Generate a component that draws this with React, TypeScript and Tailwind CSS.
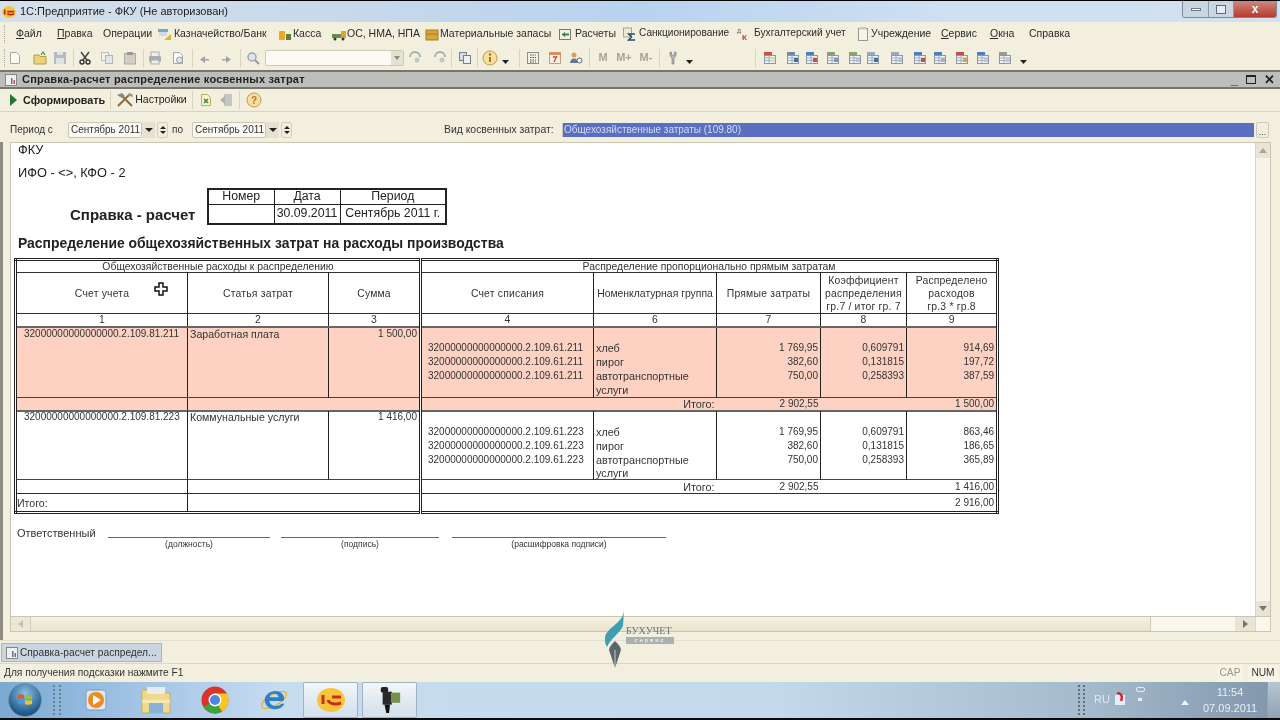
import type { ReactNode } from 'react';

type IconProps = { className?: string };

function Grip({ className = '' }: IconProps) {
  return <div className={`h-[18px] w-[2px] border-l border-dotted border-[#a8a493] ${className}`} />;
}

function Sep({ className = '' }: IconProps) {
  return <div className={`h-[18px] w-px bg-[#d9d4c0] ${className}`} />;
}

function Drop({ className = '' }: IconProps) {
  return (
    <svg viewBox="0 0 7 14" className={`h-[14px] w-[7px] shrink-0 ${className}`}>
      <path d="M0 9h7l-3.500 4z" fill="#222" />
    </svg>
  );
}

function Ic({ className = '', children }: IconProps & { children: ReactNode }) {
  return (
    <svg viewBox="0 0 14 14" className={`h-[14px] w-[14px] shrink-0 ${className}`}>
      {children}
    </svg>
  );
}

const Paper = (
  <path d="M2.500 1.500h6l3 3v8h-9z" fill="#fbfbf6" stroke="#a8a8a0" />
);

function ReportIcon({ a, b, className = '' }: IconProps & { a: string; b: string }) {
  return (
    <Ic className={className}>
      <rect x="1" y="1" width="8" height="3" fill={a} />
      <rect x="1.500" y="4.500" width="11" height="8" fill="#eef1f6" stroke="#8c98aa" />
      <path d="M2 7h10M2 9.500h10M6 5v7" stroke="#8c98aa" strokeWidth=".7" />
      <rect x="8" y="7" width="4" height="4" fill={b} />
    </Ic>
  );
}

function MemText({ children, className = '' }: IconProps & { children: ReactNode }) {
  return <span className={`text-center text-[11px] font-bold text-[#a6a498] ${className}`}>{children}</span>;
}

function TopToolbar() {
  return (
    <div className="flex h-[25px] items-center bg-[#f3efdf] pl-[4px]">
      <Grip />
      <Ic className="ml-[2px]">{Paper}</Ic>
      <Ic className="ml-[11px]">
        <path d="M1 4h5l1 1.500h6V13H1z" fill="#ecd27c" stroke="#b59a48" />
        <path d="M8 4l2-3 2 3" fill="none" stroke="#4c8f4c" strokeWidth="1.200" />
      </Ic>
      <Ic className="ml-[6px]">
        <rect x="1" y="1" width="12" height="12" fill="#b4bac0" />
        <rect x="3" y="7" width="8" height="6" fill="#dfe2e4" />
        <rect x="4" y="1" width="6" height="3" fill="#dfe2e4" />
      </Ic>
      <Sep className="ml-[6px]" />
      <Ic className="ml-[4px]">
        <path d="M3 1l6 8M11 1L5 9" stroke="#444" strokeWidth="1.500" />
        <circle cx="4" cy="11" r="2" fill="none" stroke="#333" strokeWidth="1.400" />
        <circle cx="10" cy="11" r="2" fill="none" stroke="#333" strokeWidth="1.400" />
      </Ic>
      <Ic className="ml-[8px]">
        <rect x="1.500" y="1.500" width="7" height="8" fill="#f2f2ee" stroke="#bdbdb6" />
        <rect x="5.500" y="4.500" width="7" height="8" fill="#e3e7ea" stroke="#b0b6ba" />
      </Ic>
      <Ic className="ml-[9px]">
        <rect x="1.500" y="2.500" width="11" height="10.500" fill="#d2cfc2" stroke="#adaa9e" />
        <rect x="4" y="1" width="6" height="3" fill="#999" />
      </Ic>
      <Sep className="ml-[6px]" />
      <Ic className="ml-[4px]">
        <rect x="3" y="1" width="8" height="5" fill="#eee" stroke="#aaa" />
        <rect x="1" y="5" width="12" height="6" rx="1" fill="#a9adb0" />
        <rect x="3" y="9" width="8" height="4" fill="#ecedee" stroke="#aaa" />
      </Ic>
      <Ic className="ml-[9px]">
        {Paper}
        <circle cx="8.500" cy="9" r="3" fill="#dfe5e8" stroke="#979ea4" />
      </Ic>
      <Sep className="ml-[7px]" />
      <Ic className="ml-[5px]">
        <path d="M11 8H7V5L2 8.500 7 12V9.500h4z" fill="#a0a4a6" />
      </Ic>
      <Ic className="ml-[7px]">
        <path d="M3 8h4V5l5 3.500L7 12V9.500H3z" fill="#a0a4a6" />
      </Ic>
      <Sep className="ml-[7px]" />
      <Ic className="ml-[5px]">
        <circle cx="6" cy="6" r="4" fill="#dfe6ea" stroke="#9ea6ac" strokeWidth="1.500" />
        <path d="M9 9l4 4" stroke="#9a9a94" strokeWidth="2" />
      </Ic>
      <div className="ml-[5px] flex h-[16px] w-[139px] justify-end rounded-[2px] border border-[#cdc9b8] bg-[#fbfaf4]">
        <div className="flex w-[12px] items-center justify-center bg-[#e5e1d0]">
          <div className="h-0 w-0 border-x-[3px] border-t-[4px] border-x-transparent border-t-[#8a8a80]" />
        </div>
      </div>
      <Ic className="ml-[4px]">
        <path d="M2 6a5 5 0 0 1 10 0" fill="none" stroke="#a9aeb0" strokeWidth="2" />
        <circle cx="9" cy="9" r="2.500" fill="#c3c8ca" />
      </Ic>
      <Ic className="ml-[11px]">
        <path d="M2 6a5 5 0 0 1 10 0" fill="none" stroke="#a9aeb0" strokeWidth="2" />
        <circle cx="9" cy="9" r="2.500" fill="#c3c8ca" />
      </Ic>
      <Sep className="ml-[4px]" />
      <Ic className="ml-[6px]">
        <rect x="1.500" y="1.500" width="7" height="8" fill="#d8dde2" stroke="#777f88" />
        <rect x="5.500" y="4.500" width="7" height="8" fill="#eef1f4" stroke="#777f88" />
      </Ic>
      <Sep className="ml-[5px]" />
      <svg viewBox="0 0 16 16" className="ml-[4px] h-[16px] w-[16px] shrink-0">
        <circle cx="8" cy="8" r="7" fill="#f6dfa0" stroke="#c49a45" />
        <path d="M8 7v5" stroke="#b26c18" strokeWidth="2" />
        <circle cx="8" cy="4.500" r="1.200" fill="#b26c18" />
      </svg>
      <Drop className="ml-[4px]" />
      <Sep className="ml-[10px]" />
      <Ic className="ml-[6px]">
        <rect x="1.500" y="1.500" width="11" height="11" fill="#f2f1e6" stroke="#8e8e84" />
        <path d="M4 4h6M4 6.500h6M4 9h6M4 11h6" stroke="#55554e" strokeDasharray="1.500 1" />
      </Ic>
      <Ic className="ml-[8px]">
        <rect x="1.500" y="2.500" width="11" height="10" fill="#f8efe3" stroke="#bf9f8e" />
        <rect x="1" y="1" width="12" height="3" fill="#d98c6b" />
        <path d="M5 6h3.500L6 11" fill="none" stroke="#c54a2b" strokeWidth="1.300" />
      </Ic>
      <Ic className="ml-[7px]">
        <circle cx="5" cy="4" r="2.500" fill="#d79f5d" />
        <path d="M1 12c0-6 8-6 8 0z" fill="#5f7b92" />
        <circle cx="10.500" cy="9.500" r="2.500" fill="#eef0f2" stroke="#667" />
      </Ic>
      <Sep className="ml-[6px]" />
      <MemText className="ml-[6px] w-[14px]">M</MemText>
      <MemText className="ml-[4px] w-[20px]">M+</MemText>
      <MemText className="ml-[2px] w-[20px]">M-</MemText>
      <Sep className="ml-[3px]" />
      <Ic className="ml-[6px]">
        <path d="M4 1v4l2 2v6h2V7l2-2V1L8.500 1v3h-3V1z" fill="#b0b6ba" stroke="#777" strokeWidth=".6" />
      </Ic>
      <Drop className="ml-[6px]" />
      <Sep className="ml-[62px]" />
      <ReportIcon a="#c8553d" b="#e7e1b0" className="ml-[7px]" />
      <ReportIcon a="#6f87a8" b="#3f6ea8" className="ml-[9px]" />
      <ReportIcon a="#4d7fbf" b="#c0504d" className="ml-[5px]" />
      <ReportIcon a="#8ca06c" b="#7f98b5" className="ml-[7px]" />
      <ReportIcon a="#8ca06c" b="#b4c3d4" className="ml-[8px]" />
      <ReportIcon a="#9caac0" b="#3f6ea8" className="ml-[4px]" />
      <ReportIcon a="#9caac0" b="#b4c3d4" className="ml-[10px]" />
      <ReportIcon a="#4d7fbf" b="#c0504d" className="ml-[9px]" />
      <ReportIcon a="#4d7fbf" b="#9ab3d1" className="ml-[6px]" />
      <ReportIcon a="#c0504d" b="#d6a24a" className="ml-[8px]" />
      <ReportIcon a="#4d7fbf" b="#b9c7d8" className="ml-[7px]" />
      <ReportIcon a="#9a9a90" b="#c9c7b8" className="ml-[8px]" />
      <Drop className="ml-[8px]" />
    </div>
  );
}

function MenuBar() {
  return (
    <div className="flex h-[23px] items-center whitespace-nowrap bg-[#f3efdf] pl-[4px] text-[10.5px] leading-none text-[#2b2b2b]">
      <Grip />
      <span className="ml-[10px] w-[27px]"><u>Ф</u>айл</span>
      <span className="ml-[14px] w-[35px]"><u>П</u>равка</span>
      <span className="ml-[11px] w-[47px]">Операции</span>
      <Ic className="ml-[8px]">
        <rect x="0" y="2" width="10" height="3" fill="#7fa6c9" />
        <rect x="1" y="5" width="8" height="4" fill="#cfdbe6" />
        <path d="M6 13l7-6v6z" fill="#e0b52f" />
      </Ic>
      <span className="ml-[2px] w-[94px]">Казначейство/Банк</span>
      <Ic className="ml-[10px]">
        <rect x="1" y="4" width="6" height="9" rx="1" fill="#e9a820" />
        <rect x="8" y="7" width="5" height="6" fill="#5d7f3b" />
      </Ic>
      <span className="ml-[1px] w-[30px]">Касса</span>
      <Ic className="ml-[9px]">
        <rect x="0" y="7" width="9" height="4" fill="#6b8a45" />
        <rect x="9" y="4" width="5" height="7" fill="#d8a534" />
        <circle cx="3" cy="12" r="1.500" fill="#333" />
        <circle cx="11" cy="12" r="1.500" fill="#333" />
      </Ic>
      <span className="ml-px w-[69px]">ОС, НМА, НПА</span>
      <Ic className="ml-[9px]">
        <rect x="1" y="3" width="12" height="10" fill="#dba53a" stroke="#a87a20" />
        <path d="M1 7h12" stroke="#a87a20" />
      </Ic>
      <span className="ml-[1px] w-[111px]">Материальные запасы</span>
      <Ic className="ml-[7px]">
        <rect x="1.500" y="2.500" width="11" height="10" fill="#f4f2e8" stroke="#777" />
        <path d="M3.500 7.500L7 5v5z" fill="#3b7f4c" />
        <path d="M7 6.500h4v2H7z" fill="#3b7f4c" />
      </Ic>
      <span className="ml-[3px] w-[40px]">Расчеты</span>
      <Ic className="ml-[7px]">
        <rect x="1.500" y="1" width="8" height="9" fill="#eee9d6" stroke="#a8a393" />
        <path d="M13 7H6.500l3 3-3 3H13" fill="none" stroke="#2a4a6a" strokeWidth="1.400" />
      </Ic>
      <span className="ml-[3px] w-[90px] text-[10.1px]">Санкционирование</span>
      <Ic className="ml-[8px]">
        <text x="0" y="6" fontSize="6" fill="#555">Д</text>
        <text x="5" y="13" fontSize="8" fontWeight="700" fill="#c0392b">К</text>
      </Ic>
      <span className="ml-[3px] w-[92px] text-[10.2px]">Бухгалтерский учет</span>
      <Ic className="ml-[10px]">
        <rect x="2.500" y="1.500" width="9" height="12" fill="#f5f5ee" stroke="#9a9a90" />
        <rect x="4" y="0" width="6" height="2.500" fill="#c9c9c0" />
      </Ic>
      <span className="ml-[1px] w-[60px]">Учреждение</span>
      <span className="ml-[10px] w-[36px]"><u>С</u>ервис</span>
      <span className="ml-[13px] w-[26px]"><u>О</u>кна</span>
      <span className="ml-[13px]">Справка</span>
    </div>
  );
}

function TitleBar() {
  return (
    <div className="flex h-[22px] items-start border-t border-black bg-[linear-gradient(90deg,#d4e0ea_0%,#c9d9ea_25%,#b9d3ee_50%,#cfe0f2_75%,#d3e0ee_100%)] pl-[2px]">
      <svg viewBox="0 0 16 14" className="mt-[5px] h-[12px] w-[14px] shrink-0">
        <ellipse cx="8" cy="7" rx="8" ry="7" fill="#f4c542" />
        <path d="M3 4v6M6 9c3 2 6 1 8 0M6 6.500h8" stroke="#c4291b" strokeWidth="2" fill="none" />
      </svg>
      <span className="ml-[4px] mt-[3px] text-[11px] leading-[14px] text-[#1c1c1c]">1С:Предприятие - ФКУ (Не авторизован)</span>
      <div className="ml-auto mr-[3px] flex h-[17px] w-[95px] overflow-hidden rounded-b-[3px] border border-t-0 border-[#7c8a98]">
        <div className="flex w-[25px] items-center justify-center bg-[#c9d6e3]">
          <div className="h-[3px] w-[10px] border border-[#6f7a86] bg-white" />
        </div>
        <div className="flex w-[26px] items-center justify-center border-x border-[#8c99a6] bg-[#c9d6e3]">
          <div className="h-[9px] w-[10px] border border-[#5e6a76] bg-[#e7edf3]" />
        </div>
        <div className="flex flex-1 items-center justify-center bg-[linear-gradient(180deg,#cd8a80,#b83a2c)] text-[12px] font-bold leading-none text-white">x</div>
      </div>
    </div>
  );
}

function DocTitle() {
  return (
    <div className="flex h-[19px] items-center border-y-2 border-[#77756c] bg-[#bdbdb9] pl-[5px] pr-[4px]">
      <svg viewBox="0 0 12 12" className="h-[12px] w-[12px] shrink-0">
        <rect x=".5" y=".5" width="11" height="11" fill="#f1f1ec" stroke="#888" />
        <rect x="6" y="4" width="1.500" height="6" fill="#4a7ab0" />
        <rect x="8.500" y="6" width="1.500" height="4" fill="#c0504d" />
      </svg>
      <span className="ml-[5px] text-[11px] font-bold tracking-[0.2px] text-[#222]">Справка-расчет распределение косвенных затрат</span>
      <span className="ml-auto text-[13px] font-bold leading-none text-[#222]">_</span>
      <div className="ml-[8px] h-[9px] w-[10px] border border-t-2 border-[#222]" />
      <span className="ml-[8px] mr-[1px] text-[13px] font-bold leading-none text-[#222]">✕</span>
    </div>
  );
}

function DocToolbar() {
  return (
    <div className="flex h-[23px] items-center border-b border-[#d8d3bf] bg-[#f3efdf] pl-[10px] text-[10.5px] text-[#222]">
      <div className="h-0 w-0 border-y-[6px] border-l-[7px] border-y-transparent border-l-[#1f7a30]" />
      <span className="ml-[6px] text-[10.8px] font-bold">Сформировать</span>
      <Sep className="ml-[5px]" />
      <svg viewBox="0 0 18 16" className="ml-[5px] h-[16px] w-[18px] shrink-0">
        <path d="M2 14L13 3M16 14L6 4" stroke="#8a6d3b" strokeWidth="2" />
        <path d="M1 3l5-2 3 3-3 2zM12 1l4 1 1 3-3-1z" fill="#7f8b95" />
      </svg>
      <span className="ml-px">Настройки</span>
      <Sep className="ml-[5px]" />
      <svg viewBox="0 0 14 14" className="ml-[6px] h-[14px] w-[14px] shrink-0">
        <path d="M2.500 1.500h6l3 3v8h-9z" fill="#f7f2c8" stroke="#b7ae6a" />
        <path d="M5 6l4 4M9 6l-4 4" stroke="#3c8a3c" strokeWidth="1.600" />
      </svg>
      <svg viewBox="0 0 14 14" className="ml-[6px] h-[14px] w-[14px] shrink-0">
        <rect x="5" y="1" width="8" height="12" fill="#c4c6c4" />
        <path d="M1 7l5-4v8z" fill="#aeb0ae" />
      </svg>
      <Sep className="ml-[6px]" />
      <svg viewBox="0 0 16 16" className="ml-[6px] h-[16px] w-[16px] shrink-0">
        <circle cx="8" cy="8" r="7" fill="#f6dfa0" stroke="#c49a45" />
        <text x="8" y="12" textAnchor="middle" fontSize="10" fontWeight="700" fill="#b5741e">?</text>
      </svg>
    </div>
  );
}

function PeriodInput({ className = '' }: IconProps) {
  return (
    <div className={`flex items-center ${className}`}>
      <div className="h-[16px] w-[74px] rounded-[2px] border border-[#c9c5b3] bg-[#fbfaf3] pl-[2px] text-[10px] leading-[14px]">Сентябрь 2011</div>
      <div className="flex h-[16px] w-[13px] items-center justify-center bg-[#e6e2d1]">
        <div className="h-0 w-0 border-x-[4px] border-t-[4px] border-x-transparent border-t-[#222]" />
      </div>
      <div className="ml-[2px] flex h-[16px] w-[11px] flex-col items-center justify-center gap-[2px] rounded-[2px] border border-[#d5d1bf] bg-[#f1eddf]">
        <div className="h-0 w-0 border-x-[3px] border-b-[3px] border-x-transparent border-b-[#222]" />
        <div className="h-0 w-0 border-x-[3px] border-t-[3px] border-x-transparent border-t-[#222]" />
      </div>
    </div>
  );
}

function FilterRow() {
  return (
    <div className="flex h-[30px] items-center bg-[#f3efdf] pl-[10px] pt-[5px] text-[10px] text-[#333]">
      <span className="w-[58px]">Период с</span>
      <PeriodInput />
      <span className="ml-[4px] w-[20px]">по</span>
      <PeriodInput />
      <span className="ml-[152px] w-[118px] text-[10.4px]">Вид косвенных затрат:</span>
      <div className="h-[14px] w-[692px] border-l border-[#c9c5b3] bg-[#5a6fc1] pl-[1px] text-[10px] leading-[14px] text-[#d5dcf2]">Общехозяйственные затраты (109.80)</div>
      <div className="ml-[2px] flex h-[16px] w-[13px] items-end justify-center rounded-[2px] border border-[#cfcbb9] bg-[#f1eddf] text-[9px] leading-[10px]">...</div>
    </div>
  );
}

const cellBase = 'border-[#222] px-[2px] align-middle font-normal overflow-hidden whitespace-nowrap';
const mid = 'border-r-[3px] border-r-[#222] border-double';
const pinkRow = 'bg-[#fdd2c3]';

type DataRow = { acc: string; group: string; direct: string; coef: string; sum: string };

function DataBlock({ account, item, amount, rows, total, sumTotal, pink }: {
  account: string; item: string; amount: string; rows: DataRow[]; total: string; sumTotal: string; pink?: boolean;
}) {
  const bg = pink ? pinkRow : 'bg-white';
  const lines = [{ acc: '', group: '', direct: '', coef: '', sum: '' }, ...rows, { acc: '', group: 'услуги', direct: '', coef: '', sum: '' }];
  return (
    <>
      {lines.map((row, i) => (
        <tr key={i} className={`${!pink && i === 4 ? 'h-[13px]' : 'h-[14px]'} ${bg}`}>
          {i === 0 && (
            <>
              <td rowSpan={5} className={`${cellBase} border-x align-top pl-[7px]`}>{account}</td>
              <td rowSpan={5} className={`${cellBase} border-r align-top text-[10.6px]`}>{item}</td>
              <td rowSpan={5} className={`${cellBase} ${mid} align-top text-right`}>{amount}</td>
            </>
          )}
          <td className={`${cellBase} border-r pl-[6px]`}>{row.acc}</td>
          <td className={`${cellBase} border-r text-[10.8px]`}>{row.group}</td>
          <td className={`${cellBase} border-r text-right`}>{row.direct}</td>
          <td className={`${cellBase} border-r text-right`}>{row.coef}</td>
          <td className={`${cellBase} text-right`}>{row.sum}</td>
        </tr>
      ))}
      <tr className={`${pink ? 'h-[13px]' : 'h-[14px]'} border-t border-[#444] ${bg}`}>
        <td className={`${cellBase} border-r`} />
        <td colSpan={2} className={`${cellBase} ${mid}`} />
        <td colSpan={2} className={`${cellBase} text-right text-[10.8px] font-bold`}>Итого:</td>
        <td className={`${cellBase} text-right font-bold`}>{total}</td>
        <td className={cellBase} />
        <td className={`${cellBase} text-right font-bold`}>{sumTotal}</td>
      </tr>
    </>
  );
}

function ReportTable() {
  return (
    <table className="ml-[3px] w-[982px] table-fixed border-collapse border-[3px] border-double border-[#222] text-[10px] leading-[12px] text-[#333]">
      <colgroup>
        <col className="w-[172px]" />
        <col className="w-[141px]" />
        <col className="w-[92px]" />
        <col className="w-[173px]" />
        <col className="w-[123px]" />
        <col className="w-[104px]" />
        <col className="w-[86px]" />
        <col className="w-[91px]" />
      </colgroup>
      <thead className="text-[10.4px]">
        <tr className="h-[11px] border-b border-[#333] leading-[11px]">
          <th colSpan={3} className={`${cellBase} ${mid} text-center`}>Общехозяйственные расходы к распределению</th>
          <th colSpan={5} className={`${cellBase} text-center`}>Распределение пропорционально прямым затратам</th>
        </tr>
        <tr className="h-[41px] border-b border-[#333] text-center leading-[13px] tracking-[0.2px]">
          <th className={`${cellBase} relative border-r`}>
            Счет учета
            <svg viewBox="0 0 14 14" className="absolute left-[137px] top-[9px] h-[14px] w-[14px]">
              <path d="M5 1h4v4h4v4H9v4H5V9H1V5h4z" fill="#fff" stroke="#111" strokeWidth="1.500" />
            </svg>
          </th>
          <th className={`${cellBase} border-r`}>Статья затрат</th>
          <th className={`${cellBase} ${mid}`}>Сумма</th>
          <th className={`${cellBase} border-r`}>Счет списания</th>
          <th className={`${cellBase} border-r tracking-normal`}>Номенклатурная группа</th>
          <th className={`${cellBase} border-r`}>Прямые затраты</th>
          <th className={`${cellBase} border-r`}>Коэффициент<br />распределения<br />гр.7 / итог гр. 7</th>
          <th className={cellBase}>Распределено<br />расходов<br />гр.3 * гр.8</th>
        </tr>
        <tr className="h-[13px] border-b-2 border-[#666] text-center">
          <th className={`${cellBase} border-r`}>1</th>
          <th className={`${cellBase} border-r`}>2</th>
          <th className={`${cellBase} ${mid}`}>3</th>
          <th className={`${cellBase} border-r`}>4</th>
          <th className={`${cellBase} border-r`}>6</th>
          <th className={`${cellBase} border-r`}>7</th>
          <th className={`${cellBase} border-r`}>8</th>
          <th className={cellBase}>9</th>
        </tr>
      </thead>
      <tbody>
        <DataBlock
          pink
          account="32000000000000000.2.109.81.211"
          item="Заработная плата"
          amount="1 500,00"
          total="2 902,55"
          sumTotal="1 500,00"
          rows={[
            { acc: '32000000000000000.2.109.61.211', group: 'хлеб', direct: '1 769,95', coef: '0,609791', sum: '914,69' },
            { acc: '32000000000000000.2.109.61.211', group: 'пирог', direct: '382,60', coef: '0,131815', sum: '197,72' },
            { acc: '32000000000000000.2.109.61.211', group: 'автотранспортные', direct: '750,00', coef: '0,258393', sum: '387,59' },
          ]}
        />
        <tr className="h-0 border-t-2 border-[#666]" />
        <DataBlock
          account="32000000000000000.2.109.81.223"
          item="Коммунальные услуги"
          amount="1 416,00"
          total="2 902,55"
          sumTotal="1 416,00"
          rows={[
            { acc: '32000000000000000.2.109.61.223', group: 'хлеб', direct: '1 769,95', coef: '0,609791', sum: '863,46' },
            { acc: '32000000000000000.2.109.61.223', group: 'пирог', direct: '382,60', coef: '0,131815', sum: '186,65' },
            { acc: '32000000000000000.2.109.61.223', group: 'автотранспортные', direct: '750,00', coef: '0,258393', sum: '365,89' },
          ]}
        />
        <tr className="h-[19px] border-t border-[#333]">
          <td className={`${cellBase} border-r !pl-0 text-[10.6px] font-bold`}>Итого:</td>
          <td colSpan={2} className={`${cellBase} ${mid}`} />
          <td colSpan={5} className={`${cellBase} text-right font-bold`}>2 916,00</td>
        </tr>
      </tbody>
    </table>
  );
}

function Signature() {
  const cols = [
    { label: '(должность)', cls: 'ml-[12px] w-[162px]' },
    { label: '(подпись)', cls: 'ml-[11px] w-[158px]' },
    { label: '(расшифровка подписи)', cls: 'ml-[13px] w-[214px]' },
  ];
  return (
    <div className="ml-[6px] mt-[11px] flex items-start text-[11px] text-[#333]">
      <span className="w-[79px] pt-[1px] leading-[14px]">Ответственный</span>
      <div className="flex">
        {cols.map(c => (
          <div key={c.label} className={c.cls}>
            <div className="mt-[12px] border-t border-[#666] pt-px text-center text-[8.500px] leading-[10px]">{c.label}</div>
          </div>
        ))}
      </div>
    </div>
  );
}

function HeaderBlock() {
  return (
    <div className="pl-[7px] text-[#222]">
      <div className="h-[14px] text-[12.800px] leading-[14px]">ФКУ</div>
      <div className="mt-[9px] h-[14px] text-[12.800px] leading-[14px]">ИФО - &lt;&gt;, КФО - 2</div>
      <div className="mt-[8px] flex items-end">
        <div className="mb-[2px] ml-[52px] w-[137px] text-[15px] font-bold leading-[16px]">Справка - расчет</div>
        <table className="w-[238px] table-fixed border-collapse border-2 border-[#222] text-center text-[12.300px] leading-[13px]">
          <colgroup>
            <col className="w-[66px]" />
            <col className="w-[66px]" />
            <col className="w-[106px]" />
          </colgroup>
          <tbody>
            <tr className="h-[15px]">
              <td className="border border-[#222]">Номер</td>
              <td className="border border-[#222]">Дата</td>
              <td className="border border-[#222]">Период</td>
            </tr>
            <tr className="h-[20px]">
              <td className="border border-[#222]" />
              <td className="whitespace-nowrap border border-[#222]">30.09.2011</td>
              <td className="whitespace-nowrap border border-[#222]">Сентябрь 2011 г.</td>
            </tr>
          </tbody>
        </table>
      </div>
      <div className="mt-[10px] h-[16px] text-[13.900px] font-bold leading-[16px]">Распределение общехозяйственных затрат на расходы производства</div>
    </div>
  );
}

function ReportArea() {
  return (
    <div className="ml-[10px] mr-[9px] flex h-[490px] flex-col border border-[#c9c5b3]">
      <div className="flex min-h-0 flex-1">
        <div className="min-w-0 flex-1 bg-white">
          <HeaderBlock />
          <div className="mt-[7px]">
            <ReportTable />
          </div>
          <Signature />
        </div>
        <div className="flex w-[15px] flex-col justify-between border-l border-[#d8d4c4] bg-[#f7f5ea]">
          <div className="flex h-[15px] items-center justify-center bg-[#e9e5d4]">
            <div className="h-0 w-0 border-x-[4px] border-b-[5px] border-x-transparent border-b-[#a8a59a]" />
          </div>
          <div className="flex h-[15px] items-center justify-center bg-[#e9e5d4]">
            <div className="h-0 w-0 border-x-[4px] border-t-[5px] border-x-transparent border-t-[#77756c]" />
          </div>
        </div>
      </div>
      <div className="flex h-[15px] border-t border-[#c9c5b3] bg-[#f9f7ee]">
        <div className="flex w-[19px] items-center justify-center bg-[#ece8d8]">
          <div className="h-0 w-0 border-y-[4px] border-r-[5px] border-y-transparent border-r-[#c4c2b6]" />
        </div>
        <div className="w-[1121px] border-x border-[#cfcbb9] bg-[linear-gradient(180deg,#f6f2e2,#e9e3cd)]" />
        <div className="ml-auto flex w-[20px] items-center justify-center bg-[#e9e5d4]">
          <div className="h-0 w-0 border-y-[4px] border-l-[5px] border-y-transparent border-l-[#77756c]" />
        </div>
        <div className="w-[15px] border-l border-[#d8d4c4]" />
      </div>
    </div>
  );
}

function Watermark() {
  return (
    <div className="absolute left-[603px] top-[610px] flex items-center">
      <svg viewBox="0 0 24 60" className="h-[60px] w-[24px]">
        <path d="M21 0C20 12 10 14 3 24c-2 4-1 10 1 13C8 28 16 24 20 16z" fill="#3f9fb0" />
        <path d="M12 58L6 40c0-3 3-6 6-9 3 3 6 6 6 9z" fill="#5c666c" />
        <path d="M12 58V40" stroke="#dfe3e4" strokeWidth=".8" />
      </svg>
      <div className="-ml-px -mt-[11px] flex w-[48px] flex-col font-['Liberation_Serif',serif] text-[#6b7479]">
        <span className="text-[10px] leading-[11px]">БУХУЧЕТ</span>
        <span className="mt-[1px] h-[7px] bg-[#aab0b3] text-center font-['Liberation_Sans',sans-serif] text-[6px] leading-[7px] tracking-[2px] text-white">сервис</span>
      </div>
    </div>
  );
}

function TaskTile({ children, active }: { children: ReactNode; active?: boolean }) {
  return (
    <div className={`flex h-[36px] w-[55px] items-center justify-center ${active ? 'rounded-[2px] border border-[#9fb2c4] bg-[linear-gradient(180deg,#f2f6fa,#d2dfea)]' : ''}`}>
      {children}
    </div>
  );
}

function Taskbar() {
  return (
    <div className="flex h-[38px] border-b-2 border-[#0a0a0a] bg-[linear-gradient(90deg,#7aa9d2_0%,#9fc2e4_10%,#c8dcf0_22%,#c5d9ec_60%,#a6bacd_85%,#8196ab_100%)]">
      <div className="ml-[8px] mt-[1px] flex h-[34px] w-[34px] items-center justify-center rounded-full border border-[#7a8da0] bg-[radial-gradient(circle_at_50%_30%,#8fc0e2,#1f5c90_70%,#123f68)]">
        <svg viewBox="0 0 18 18" className="h-[18px] w-[18px]">
          <path d="M2 4c2-1 4-1 6 0v4c-2-1-4-1-6 0z" fill="#e2572c" />
          <path d="M9 4c2 1 4 1 7 0v4c-3 1-5 1-7 0z" fill="#8cc63e" />
          <path d="M2 9c2-1 4-1 6 0v4c-2-1-4-1-6 0z" fill="#3f9ce0" />
          <path d="M9 9c2 1 4 1 7 0v4c-3 1-5 1-7 0z" fill="#f4c02c" />
        </svg>
      </div>
      <div className="ml-[11px] mt-[3px] h-[30px] w-[8px] border-x-2 border-dotted border-[#6d7e8f]" />
      <div className="ml-[11px] flex h-[36px] w-[50px] items-center justify-center">
        <svg viewBox="0 0 26 26" className="h-[26px] w-[26px]">
          <rect x="2" y="3" width="20" height="20" rx="3" fill="#dce9f5" stroke="#7f9bb8" />
          <circle cx="12" cy="13" r="8" fill="#ee8a1e" />
          <path d="M9 8l8 5-8 5z" fill="#fff" />
        </svg>
      </div>
      <div className="ml-[9px] flex h-[36px] w-[50px] items-center justify-center">
        <svg viewBox="0 0 32 28" className="h-[28px] w-[32px]">
          <path d="M2 4h11l2 3h15v20H2z" fill="#f0d98c" stroke="#c9ad5c" />
          <rect x="7" y="1" width="18" height="7" fill="#e8eef0" />
          <rect x="9" y="17" width="14" height="10" fill="#88b3d2" />
          <rect x="2" y="14" width="28" height="3" fill="#f6e8b4" />
        </svg>
      </div>
      <div className="ml-[9px] flex h-[36px] w-[50px] items-center justify-center">
        <svg viewBox="0 0 28 28" className="h-[28px] w-[28px]">
          <circle cx="14" cy="14" r="13.500" fill="#d8342a" />
          <path d="M14 14L2.500 21A13.500 13.500 0 0 0 21 25.500z" fill="#3da33f" />
          <path d="M14 7.500h12A13.500 13.500 0 0 1 21 25.500L14 14z" fill="#f6c626" />
          <circle cx="14" cy="14" r="6.500" fill="#fff" />
          <circle cx="14" cy="14" r="5" fill="#4a87e0" />
        </svg>
      </div>
      <div className="ml-[9px] flex h-[36px] w-[50px] items-center justify-center">
        <svg viewBox="0 0 30 30" className="h-[28px] w-[28px]">
          <ellipse cx="15" cy="15" rx="15" ry="6" fill="none" stroke="#e9b52f" strokeWidth="1.500" transform="rotate(-30 15 15)" />
          <path d="M25 16H10c1 6 9 7 13 3h3c-3 8-20 9-21-4C5 6 20 1 25 10c1 2 1 4 0 6zM10 12h10c-1-5-9-5-10 0z" fill="#2e7fc6" />
        </svg>
      </div>
      <div className="ml-[4px] flex gap-[4px]">
        <TaskTile active>
          <svg viewBox="0 0 28 24" className="h-[24px] w-[28px]">
            <ellipse cx="14" cy="12" rx="14" ry="12" fill="#f6c53a" />
            <path d="M6 7v9" stroke="#cf2a1a" strokeWidth="3" />
            <path d="M24 9h-9M11 12c1 4 8 5 13 3" stroke="#cf2a1a" strokeWidth="3" fill="none" />
          </svg>
        </TaskTile>
        <TaskTile active>
          <svg viewBox="0 0 26 30" className="h-[28px] w-[24px]">
            <rect x="3" y="1" width="8" height="6" rx="2" fill="#222" />
            <rect x="5" y="6" width="10" height="14" fill="#2a2a2a" />
            <path d="M7 20h6l-1 9H9z" fill="#111" />
            <rect x="14" y="7" width="10" height="11" fill="#74904a" />
          </svg>
        </TaskTile>
      </div>
      <div className="ml-auto flex">
        <div className="mt-[3px] h-[30px] w-[7px] border-x-2 border-dotted border-[#5d6e7f]" />
        <span className="ml-[9px] mt-[10px] w-[14px] whitespace-nowrap text-[11px] leading-[14px] text-[#dfe8f0]">RU</span>
        <svg viewBox="0 0 14 14" className="ml-[5px] mt-[10px] h-[14px] w-[14px]">
          <rect x="2" y="3" width="10" height="10" fill="#e6eef6" />
          <path d="M4 1c4 0 6 3 4 8" stroke="#cf2a2a" strokeWidth="2.500" fill="none" />
        </svg>
        <div className="ml-[7px] mt-[5px] flex w-[12px] flex-col items-center gap-[6px]">
          <div className="h-[5px] w-[9px] rounded-[2px] border border-[#e6edf4]" />
          <div className="h-[3px] w-[4px] bg-[#e6edf4]" />
        </div>
        <div className="ml-[35px] mt-[18px] h-0 w-0 border-x-[4px] border-b-[5px] border-x-transparent border-b-[#eef3f8]" />
        <div className="ml-[14px] w-[54px] text-center text-[11px] leading-[16px] text-[#e9eff5]">
          <div className="mt-[2px]">11:54</div>
          <div>07.09.2011</div>
        </div>
        <div className="ml-[10px] w-[13px] border-l border-[#8fa2b5] bg-[linear-gradient(180deg,#b9c7d4,#8fa1b3)]" />
      </div>
    </div>
  );
}

export default function App() {
  return (
    <div className="relative flex h-[720px] w-[1280px] flex-col overflow-hidden bg-[#f3efdf] font-['Liberation_Sans',sans-serif] blur-[0.35px]">
      <TitleBar />
      <MenuBar />
      <TopToolbar />
      <div className="flex min-h-0 flex-1 flex-col border-l-[3px] border-[#8e8c82]">
        <div className="-ml-[3px]">
          <DocTitle />
          <DocToolbar />
          <FilterRow />
        </div>
        <div className="-ml-[3px]">
          <ReportArea />
        </div>
      </div>
      <div className="flex h-[23px] items-start border-t border-[#e5e0cd] px-px pt-[2px]">
        <div className="flex h-[19px] w-[161px] items-center border border-[#a9b6c2] bg-[#c9d6e2] pl-[4px] text-[10.2px] text-[#333]">
          <svg viewBox="0 0 12 12" className="h-[12px] w-[12px] shrink-0">
            <rect x=".5" y=".5" width="11" height="11" fill="#f1f1ec" stroke="#888" />
            <rect x="6" y="4" width="1.500" height="6" fill="#4a7ab0" />
            <rect x="8.500" y="6" width="1.500" height="4" fill="#c0504d" />
          </svg>
          <span className="ml-[2px] whitespace-nowrap">Справка-расчет распредел...</span>
        </div>
      </div>
      <div className="flex h-[19px] items-center border-t border-[#dcd7c3] pl-[4px] text-[10.2px] text-[#333]">
        <span>Для получения подсказки нажмите F1</span>
        <div className="ml-auto flex h-[17px] w-[26px] items-center justify-center bg-[#f7f4e6] text-[#99968a]">CAP</div>
        <div className="ml-[5px] mr-[2px] flex h-[17px] w-[30px] items-center justify-center bg-[#f7f4e6]">NUM</div>
      </div>
      <Taskbar />
      <Watermark />
    </div>
  );
}
